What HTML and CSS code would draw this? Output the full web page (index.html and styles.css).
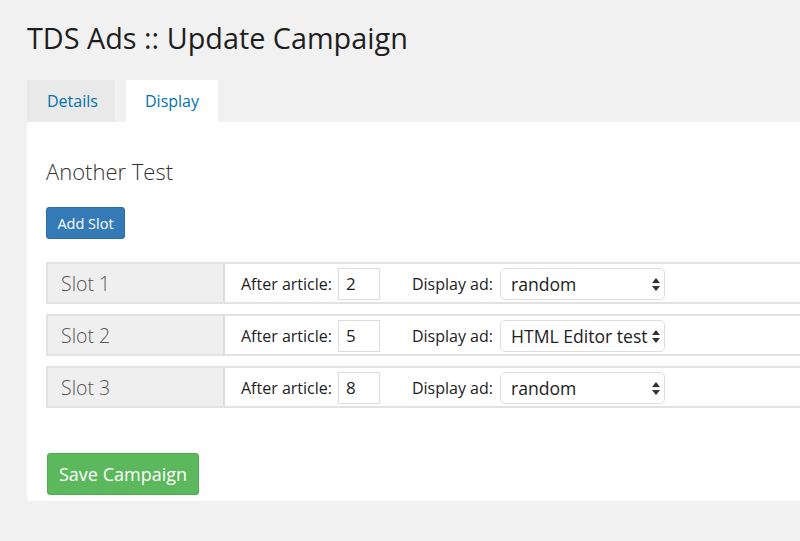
FILE: index.html
```html
<!DOCTYPE html>
<html>
<head>
<meta charset="utf-8">
<link rel="stylesheet" href="styles.css">
</head>
<body>
<div class="wrap">
  <h1 class="title">TDS Ads :: Update Campaign</h1>
  <div class="tabs">
    <a class="tab tab-details">Details</a>
    <a class="tab tab-display active">Display</a>
  </div>
  <div class="panel">
    <h2 class="name">Another Test</h2>
    <button class="btn btn-blue">Add Slot</button>
    <div class="slots">
      <div class="slot">
        <div class="slot-label">Slot 1</div>
        <div class="slot-body">
          <label class="lbl">After article:</label>
          <div class="num">2</div>
          <label class="lbl lbl-ad">Display ad:</label>
          <div class="select"><span>random</span><span class="arrows"><svg width="8" height="13" viewBox="0 0 8 13"><path d="M4 0L8 5H0Z" fill="#333"/><path d="M4 13L8 8H0Z" fill="#333"/></svg></span></div>
        </div>
      </div>
      <div class="slot">
        <div class="slot-label">Slot 2</div>
        <div class="slot-body">
          <label class="lbl">After article:</label>
          <div class="num">5</div>
          <label class="lbl lbl-ad">Display ad:</label>
          <div class="select"><span>HTML Editor test</span><span class="arrows"><svg width="8" height="13" viewBox="0 0 8 13"><path d="M4 0L8 5H0Z" fill="#333"/><path d="M4 13L8 8H0Z" fill="#333"/></svg></span></div>
        </div>
      </div>
      <div class="slot">
        <div class="slot-label">Slot 3</div>
        <div class="slot-body">
          <label class="lbl">After article:</label>
          <div class="num">8</div>
          <label class="lbl lbl-ad">Display ad:</label>
          <div class="select"><span>random</span><span class="arrows"><svg width="8" height="13" viewBox="0 0 8 13"><path d="M4 0L8 5H0Z" fill="#333"/><path d="M4 13L8 8H0Z" fill="#333"/></svg></span></div>
        </div>
      </div>
    </div>
    <button class="btn btn-green">Save Campaign</button>
  </div>
</div>
</body>
</html>
```
FILE: styles.css
```css
html, body {
  margin: 0;
  padding: 0;
  background: #f1f1f1;
  font-family: "Open Sans", "Noto Sans", sans-serif;
  color: #23282d;
  overflow: hidden;
}
.wrap {
  padding: 0 0 0 27px;
  width: 800px;
}
.title {
  margin: 0;
  padding-top: 18px;
  font-size: 28.8px;
  font-weight: 400;
  line-height: 39px;
  color: #1e1e1e;
}
.tabs {
  display: flex;
  gap: 11px;
  margin-top: 23px;
}
.tab {
  display: block;
  height: 42px;
  line-height: 42px;
  font-size: 16px;
  color: #0073aa;
  background: #e9e9e9;
}
.tab-details {
  width: 68px;
  padding-left: 20px;
}
.tab-display {
  width: 73px;
  padding-left: 19px;
  background: #fff;
}
.panel {
  background: #fff;
  width: 800px;
  padding: 34px 0 7px 19px;
  box-sizing: border-box;
  height: 379px;
}
.name {
  margin: 0;
  font-size: 22px;
  font-weight: 300;
  color: #333;
  line-height: 30px;
}
.btn {
  display: block;
  border-radius: 3px;
  font-family: "Open Sans", "Noto Sans", sans-serif;
  color: #fff;
  cursor: pointer;
}
.btn-blue {
  margin-top: 21px;
  background: #337ab7;
  border: 1px solid #2e6da4;
  font-size: 14.5px;
  height: 32px;
  width: 79px;
  padding: 0;
}
.slots {
  margin-top: 23px;
  display: flex;
  flex-direction: column;
  gap: 10px;
}
.slot {
  display: flex;
  border: 2px solid #e2e2e2;
  border-right: none;
  height: 38px;
  width: 760px;
}
.slot-label {
  width: 162px;
  background: #efefef;
  border-right: 2px solid #dcdcdc;
  padding-left: 13px;
  padding-top: 1px;
  font-size: 19.5px;
  font-weight: 300;
  color: #555;
  line-height: 38px;
}
.slot-body {
  display: flex;
  align-items: center;
  padding-left: 16px;
  padding-top: 2px;
  font-size: 16px;
  color: #222;
}
.lbl {
  margin-right: 6px;
}
.lbl-ad {
  margin-left: 32px;
  margin-right: 7px;
}
.num {
  width: 33px;
  height: 30px;
  border: 1px solid #ddd;
  padding-left: 7px;
  line-height: 30px;
  font-size: 17px;
}
.select {
  display: flex;
  align-items: center;
  justify-content: space-between;
  width: 149px;
  height: 30px;
  border: 1px solid #ddd;
  border-radius: 5px;
  padding: 0 4px 0 10px;
  font-size: 17.6px;
  color: #222;
}
.arrows {
  display: flex;
  align-items: center;
}
.btn-green {
  margin-top: 45px;
  margin-left: 1px;
  background: #5cb85c;
  border: 1px solid #4cae4c;
  font-size: 18px;
  height: 42px;
  width: 152px;
  padding: 0;
}
```
